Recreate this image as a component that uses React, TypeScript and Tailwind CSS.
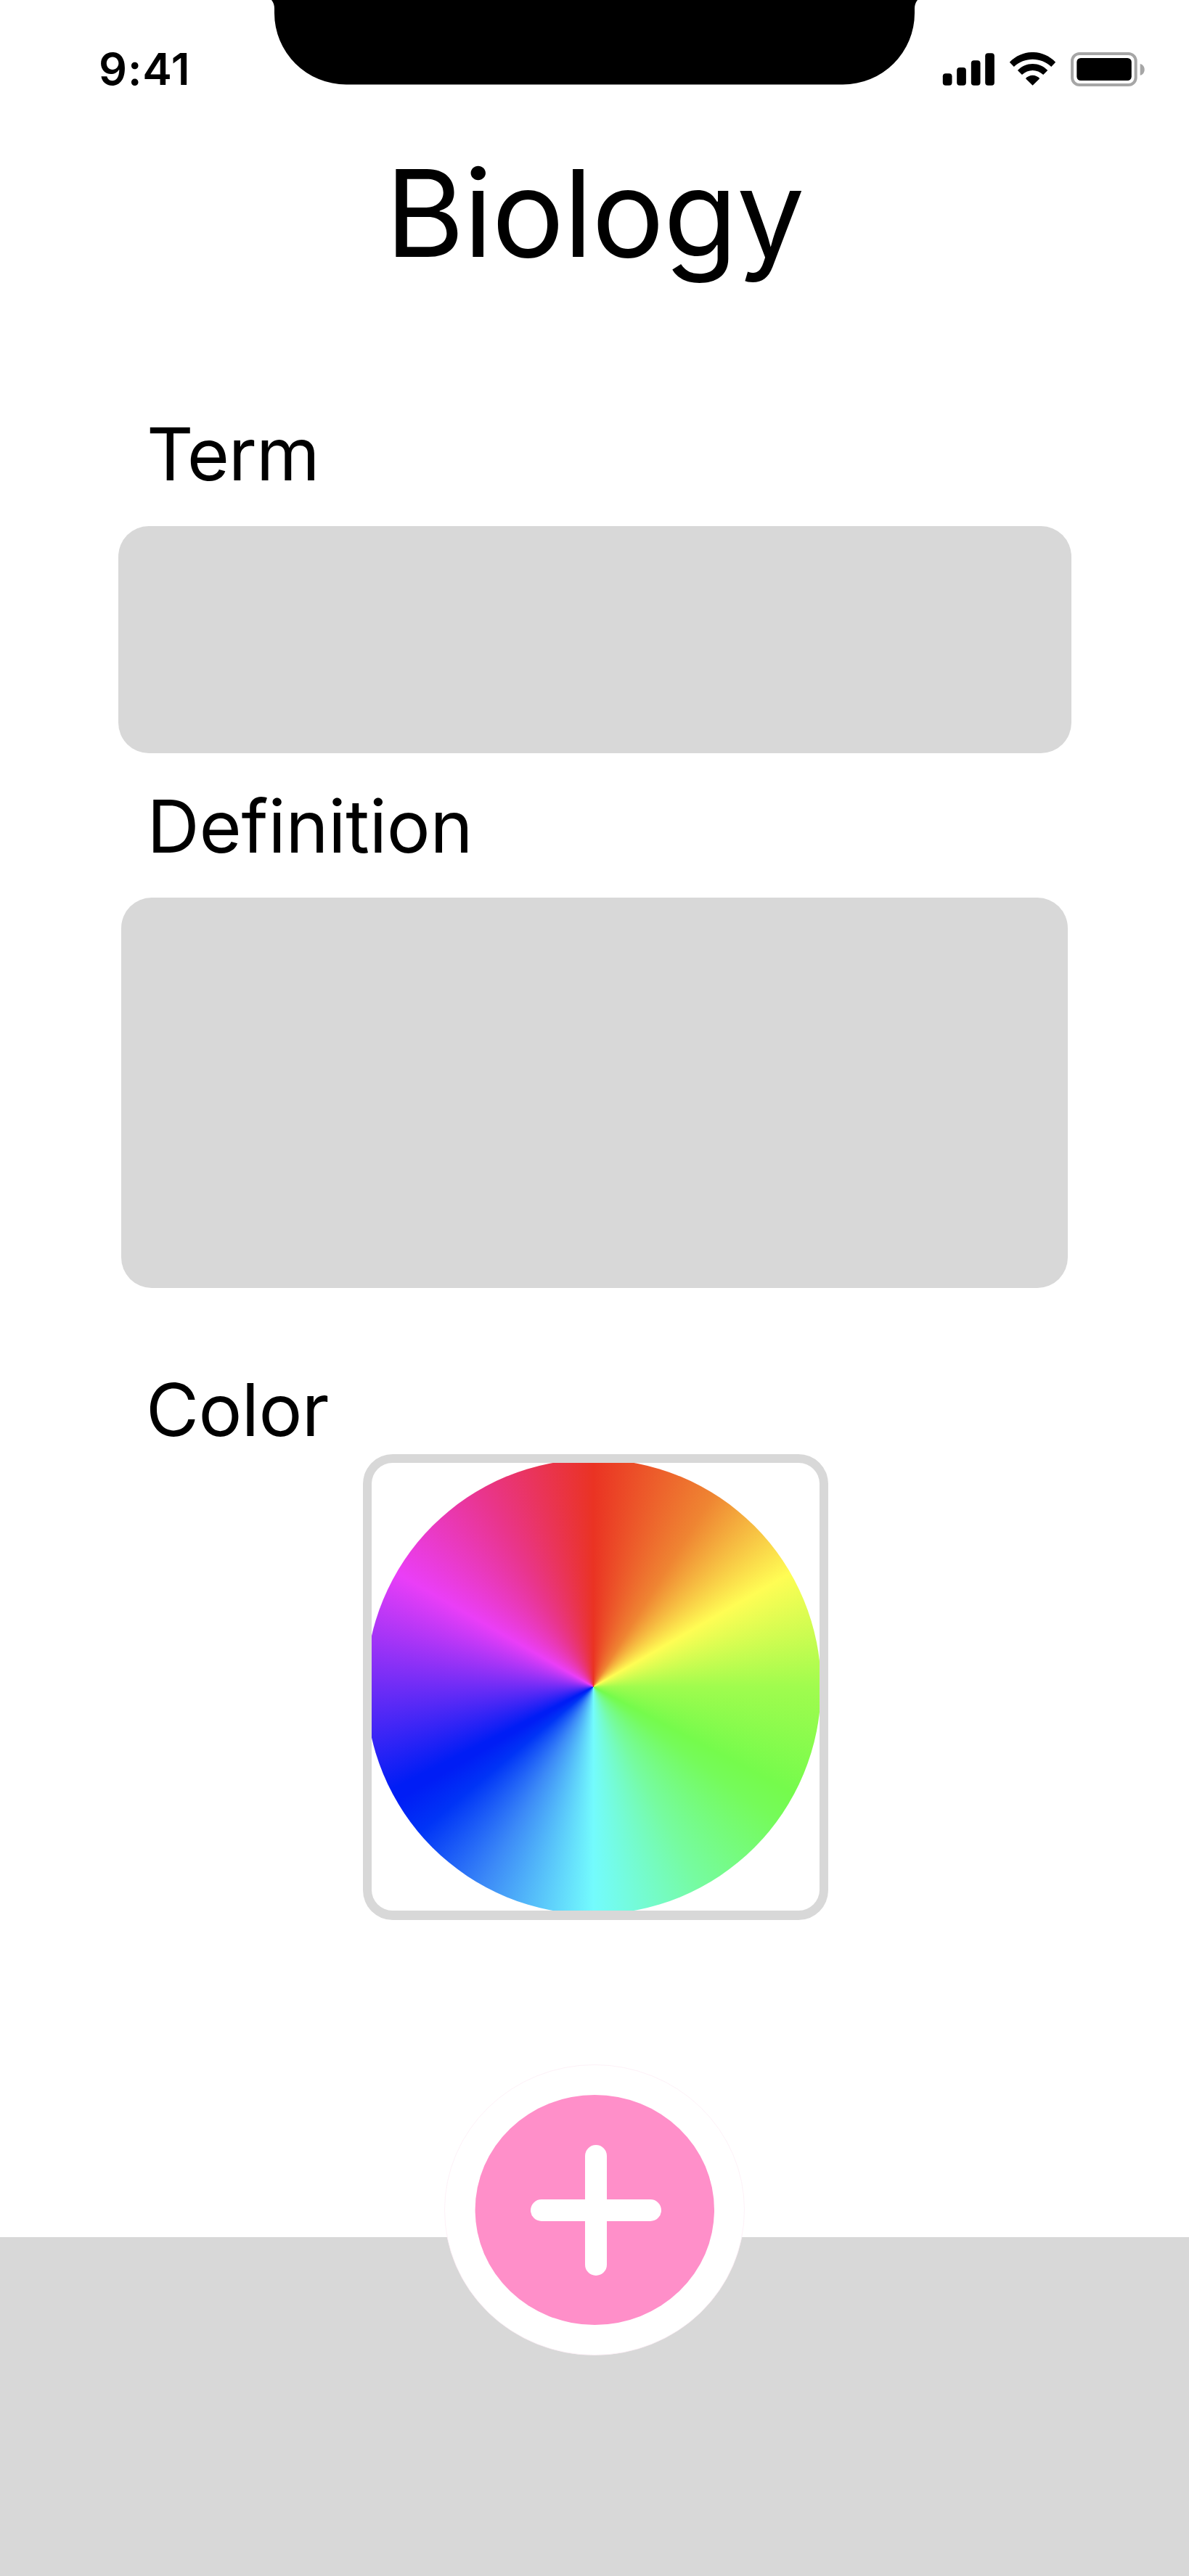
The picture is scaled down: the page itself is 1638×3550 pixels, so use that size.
function StatusIcons() {
  return (
    <svg className="mt-[72px] ml-[34px] block h-[48px] w-[282.5px]" viewBox="0 0 280 48" preserveAspectRatio="none">
      <rect x="0.8" y="29.3" width="12.6" height="16.5" rx="4" />
      <rect x="20" y="21" width="12.6" height="24.8" rx="4" />
      <rect x="39.5" y="11.3" width="12.6" height="34.5" rx="4" />
      <rect x="58.7" y="1.3" width="12.6" height="44.5" rx="4" />
      <path d="M92 13.7C109.500 -4.6 137.500 -4.6 154.8 13.7L148.9 20C134.500 6.3 112.500 6.3 98 20Z" />
      <path d="M103 25C114 13 133 13 144 25L138 31C129.500 23 117.500 23 109 31Z" />
      <path d="M113.9 36.2C119 30.2 128 30.2 133.1 36.2L123.500 45.8Z" />
      <rect x="177.500" y="2" width="86.8" height="43" rx="10" fill="none" stroke="#a6a6a6" strokeWidth="4" />
      <rect x="183.7" y="8" width="74.8" height="31" rx="5.5" />
      <path d="M270.300 16C278.200 17.5 278.200 30.3 270.300 31.8Z" fill="#a6a6a6" />
    </svg>
  );
}

export default function App() {
  return (
    <main className="flex h-[3550px] w-[1638px] flex-col overflow-hidden bg-white font-['Inter',sans-serif] text-black">
      <header className="flex h-[180px] shrink-0 items-start">
        <div className="w-[374px] pt-[56px] pl-[136px] text-[61px] leading-[78px] font-semibold tracking-[0.9px]">9:41</div>
        <svg className="block h-[117px] w-[890px]" viewBox="0 0 890 117">
          <path d="M0 0Q4 5 4 12V18A99 98.5 0 0 0 103 116.5H787A99 98.5 0 0 0 886 18V12Q886 5 890 0Z" />
        </svg>
        <StatusIcons />
      </header>
      <h1 className="h-[385px] shrink-0 pt-[12px] text-center text-[166.5px] leading-[204px] tracking-[-1.2px]">Biology</h1>
      <section className="shrink-0 px-[162.5px]">
        <h2 className="pl-[39.5px] text-[100px] leading-[122px] tracking-[-1.1px]">Term</h2>
        <div className="mt-[38px] h-[312.5px] rounded-[42px] bg-[#d8d8d8]" />
        <h2 className="mt-[40.5px] pl-[40px] text-[100px] leading-[122px] tracking-[-0.2px]">Definition</h2>
        <div className="mx-[4.5px] mt-[37px] h-[538px] rounded-[42px] bg-[#d8d8d8]" />
        <h2 className="mt-[107px] pl-[38.5px] text-[100px] leading-[122px] tracking-[-0.6px]">Color</h2>
        <div className="ml-[337.5px] h-[641.6px] w-[641.4px] rounded-[41px] bg-[#d8d8d8] p-[12.4px]">
          <div className="h-full w-full overflow-hidden rounded-[28.6px] bg-white">
            <div className="-mt-[5.4px] -ml-[8.8px] h-[627px] w-[627px] rounded-full bg-[conic-gradient(#ea3323,#ef8532_32deg,#fffd54_60deg,#a0fc4e_90deg,#75fb4c_118deg,#75fb5a_126deg,#76fba0_152deg,#73fbfd_180deg,#3c8af7_209deg,#0034f6_230deg,#001df5_240deg,#001df5_243deg,#ea3ef7_300deg,#e9358d_330deg,#ea3323)]" />
          </div>
        </div>
      </section>
      <footer className="mt-auto flex h-[467px] shrink-0 justify-center bg-[#d8d8d8]">
        <button aria-label="Add" className="-mt-[238px] h-[401px] w-[414px]">
          <svg className="block h-full w-full" viewBox="0 0 414 401">
            <ellipse cx="207" cy="200.5" rx="206.5" ry="200" fill="white" stroke="#fdeef5" strokeWidth=".8" />
            <ellipse cx="207.3" cy="200.5" rx="164.7" ry="158.5" fill="#ff8fc9" />
            <path d="M209 126V276M134 201H284" stroke="white" strokeWidth="30" strokeLinecap="round" />
          </svg>
        </button>
      </footer>
    </main>
  );
}
